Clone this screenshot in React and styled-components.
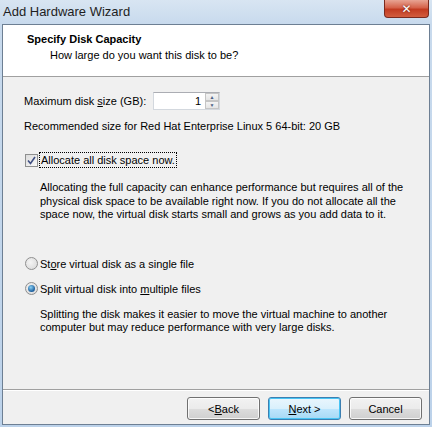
import React from 'react';
import styled, { createGlobalStyle } from 'styled-components';

const GlobalStyle = createGlobalStyle`
  html, body {
    margin: 0;
    padding: 0;
    width: 432px;
    height: 427px;
    overflow: hidden;
    background: #c6d9ec;
  }
`;

const Frame = styled.div`
  width: 432px;
  height: 427px;
  box-sizing: border-box;
  display: flex;
  flex-direction: column;
  padding: 0 2px 2px 2px;
  background: linear-gradient(180deg, #d8e5f2 0px, #c8daed 24px, #bcd2ea 100%);
  font-family: "Liberation Sans", Arial, sans-serif;
  font-size: 11px;
  color: #000;
`;

const TitleBar = styled.div`
  height: 24px;
  display: flex;
  align-items: flex-start;
  justify-content: space-between;
`;

const Title = styled.div`
  font-family: "Liberation Sans", Arial, sans-serif;
  font-size: 13px;
  color: #1e1e1e;
  padding-top: 4px;
  padding-left: 1px;
`;

const CloseButton = styled.div`
  width: 45px;
  height: 18px;
  margin-right: 1px;
  box-sizing: border-box;
  border: 1px solid #7a2a1e;
  border-top: none;
  border-radius: 0 0 4px 4px;
  background: linear-gradient(180deg, #e8a493 0%, #d5624a 45%, #c23b21 55%, #d25d3e 100%);
  display: flex;
  align-items: center;
  justify-content: center;
  color: #fff;
  font-family: "DejaVu Sans", sans-serif;
  font-weight: bold;
  font-size: 12px;
  text-shadow: 0 0 2px #5a1a10;
`;

const Client = styled.div`
  flex: 1;
  display: flex;
  flex-direction: column;
  border: 1px solid #6d7f93;
  background: #f0f0f0;
`;

const Header = styled.div`
  height: 52px;
  background: #fff;
  border-bottom: 1px solid #a0a0a0;
  padding: 7px 0 0 24px;
  box-sizing: border-box;
`;

const HeaderTitle = styled.div`
  font-weight: bold;
  line-height: 14px;
`;

const HeaderSub = styled.div`
  padding-left: 23px;
  margin-top: 2px;
  line-height: 14px;
`;

const Body = styled.div`
  flex: 1;
  padding: 15px 0 0 21px;
`;

const Row = styled.div`
  display: flex;
  align-items: center;
  height: ${p => p.h || 14}px;
  margin-top: ${p => p.mt || 0}px;
  white-space: nowrap;
`;

const Label = styled.span`
  width: ${p => p.w ? p.w + 'px' : 'auto'};
  display: inline-block;
`;

const Spin = styled.div`
  width: 67px;
  height: 18px;
  box-sizing: border-box;
  border: 1px solid #d3d8de;
  border-top-color: #abadb3;
  background: #fff;
  display: flex;
`;

const SpinValue = styled.div`
  flex: 1;
  text-align: right;
  padding-right: 4px;
  line-height: 16px;
`;

const SpinButtons = styled.div`
  width: 14px;
  display: flex;
  flex-direction: column;
`;

const SpinArrow = styled.div`
  flex: 1;
  display: flex;
  align-items: center;
  justify-content: center;
  background: linear-gradient(180deg, #f4f4f4, #e5e5e5);
  border: 1px solid #c5c5c5;
  font-size: 5px;
  color: #4d6185;
`;

const Check = styled.div`
  width: 13px;
  height: 13px;
  box-sizing: border-box;
  border: 1px solid #8e8f8f;
  background: linear-gradient(135deg, #dcdcdc, #f8f8f8);
  display: flex;
  align-items: center;
  justify-content: center;
  margin-right: 2px;
  margin-left: 1px;
`;

const Focus = styled.span`
  outline: 1px dotted #000;
  padding: 1px 1px;
`;

const Radio = styled.div`
  width: 13px;
  height: 13px;
  box-sizing: border-box;
  border-radius: 50%;
  border: 1px solid #8f8f8f;
  background: radial-gradient(circle at 40% 40%, #f4f4f4, #d6d6d6);
  display: flex;
  align-items: center;
  justify-content: center;
  margin-left: 1px;
  margin-right: 2px;
`;

const RadioDot = styled.div`
  width: 7px;
  height: 7px;
  border-radius: 50%;
  background: radial-gradient(circle at 40% 35%, #8ad1f5, #1a5c9c 70%, #0c3f78);
`;

const Para = styled.div`
  padding-left: 16px;
  margin-top: ${p => p.mt || 0}px;
  line-height: 13.5px;
  white-space: nowrap;
`;

const Footer = styled.div`
  height: 35px;
  box-sizing: border-box;
  border-top: 1px solid #a0a0a0;
  box-shadow: inset 0 1px 0 #fff;
  display: flex;
  justify-content: flex-end;
  align-items: flex-start;
  padding: 7px 7px 0 0;
  gap: 8px;
`;

const Button = styled.div`
  width: 73px;
  height: 23px;
  box-sizing: border-box;
  border: 1px solid ${p => p.primary ? '#3c7fb1' : '#707070'};
  border-radius: 3px;
  background: ${p => p.primary
    ? 'linear-gradient(180deg, #eaf6fd 0%, #d9f0fc 50%, #bee6fd 51%, #a7d9f5 100%)'
    : 'linear-gradient(180deg, #f2f2f2 0%, #ebebeb 50%, #dddddd 51%, #cfcfcf 100%)'};
  box-shadow: inset 0 0 0 1px ${p => p.primary ? '#48c4f4' : 'rgba(255,255,255,0.8)'};
  display: flex;
  align-items: center;
  justify-content: center;
`;

const U = styled.span`
  text-decoration: underline;
`;

export default function App() {
  return (
    <Frame>
      <GlobalStyle />
      <TitleBar>
        <Title>Add Hardware Wizard</Title>
        <CloseButton>✕</CloseButton>
      </TitleBar>
      <Client>
        <Header>
          <HeaderTitle>Specify Disk Capacity</HeaderTitle>
          <HeaderSub>How large do you want this disk to be?</HeaderSub>
        </Header>
        <Body>
          <Row h={18}>
            <Label w={129}>Maximum disk <U>s</U>ize (GB):</Label>
            <Spin>
              <SpinValue>1</SpinValue>
              <SpinButtons>
                <SpinArrow>▲</SpinArrow>
                <SpinArrow>▼</SpinArrow>
              </SpinButtons>
            </Spin>
          </Row>
          <Row mt={9}>Recommended size for Red Hat Enterprise Linux 5 64-bit: 20 GB</Row>
          <Row mt={19} h={16}>
            <Check>
              <svg width="9" height="9" viewBox="0 0 9 9">
                <path d="M1 4.5 L3.5 7.5 L8 1" fill="none" stroke="#3f4f83" strokeWidth="1.6" />
              </svg>
            </Check>
            <Focus>Allocate all disk space now.</Focus>
          </Row>
          <Para mt={13}>
            Allocating the full capacity can enhance performance but requires all of the<br />
            physical disk space to be available right now. If you do not allocate all the<br />
            space now, the virtual disk starts small and grows as you add data to it.
          </Para>
          <Row mt={35}>
            <Radio />
            <span>St<U>o</U>re virtual disk as a single file</span>
          </Row>
          <Row mt={11}>
            <Radio><RadioDot /></Radio>
            <span>Split virtual disk into <U>m</U>ultiple files</span>
          </Row>
          <Para mt={12}>
            Splitting the disk makes it easier to move the virtual machine to another<br />
            computer but may reduce performance with very large disks.
          </Para>
        </Body>
        <Footer>
          <Button>&lt; <U>B</U>ack</Button>
          <Button primary><U>N</U>ext &gt;</Button>
          <Button>Cancel</Button>
        </Footer>
      </Client>
    </Frame>
  );
}
